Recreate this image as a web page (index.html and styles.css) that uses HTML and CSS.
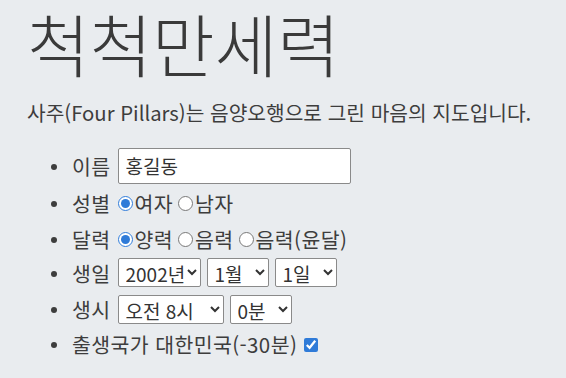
FILE: index.html
```html
<!DOCTYPE html>
<html lang="ko">
<head>
<meta charset="utf-8">
<title>척척만세력</title>
<link rel="stylesheet" href="styles.css">
</head>
<body>
<main class="page">
  <h1 class="title">척척만세력</h1>
  <p class="lead">사주(Four Pillars)는 음양오행으로 그린 마음의 지도입니다.</p>
  <ul class="form-list">
    <li class="row row-1"><span class="label">이름</span><input class="name-input" type="text" value="홍길동"></li>
    <li class="row row-2"><span class="label">성별</span><input class="radio" type="radio" name="sex" checked><span class="opt">여자</span><input class="radio" type="radio" name="sex"><span class="opt">남자</span></li>
    <li class="row row-3"><span class="label">달력</span><input class="radio" type="radio" name="cal" checked><span class="opt">양력</span><input class="radio" type="radio" name="cal"><span class="opt">음력</span><input class="radio" type="radio" name="cal"><span class="opt">음력(윤달)</span></li>
    <li class="row row-4"><span class="label">생일</span>
      <select class="sel sel-year"><option>2002년</option></select>
      <select class="sel sel-month"><option>1월</option></select>
      <select class="sel sel-day"><option>1일</option></select>
    </li>
    <li class="row row-5"><span class="label">생시</span>
      <select class="sel sel-hour"><option>오전 8시</option></select>
      <select class="sel sel-min"><option>0분</option></select>
    </li>
    <li class="row row-6"><span class="label">출생국가 대한민국(-30분)</span><input class="check" type="checkbox" checked></li>
  </ul>
</main>
</body>
</html>
```

FILE: styles.css
```css
html, body {
  margin: 0;
  padding: 0;
  background: #e9ecef;
}
body {
  font-family: "Noto Sans CJK KR", "Noto Sans", sans-serif;
  color: #3d3d3d;
}
.page {
  padding: 0 0 0 27px;
}
.title {
  margin: 0;
  font-size: 68px;
  font-weight: 300;
  line-height: 86px;
  color: #3a3a3a;
}
.lead {
  margin: 0;
  font-size: 20.3px;
  line-height: 26px;
  padding-top: 13px;
}
.form-list {
  margin: 0;
  padding: 22px 0 0 24px;
  list-style: none;
}
.row {
  display: flex;
  align-items: center;
  font-size: 20.5px;
  letter-spacing: 0.4px;
  line-height: 26px;
}
.row::before {
  content: "";
  flex: none;
  width: 6px;
  height: 6px;
  border-radius: 50%;
  background: #3d3d3d;
  margin-right: 15px;
  margin-top: 2px;
}
.row-1 { height: 37px; }
.row-2 { height: 38px; }
.row-3 { height: 33px; }
.row-4 { height: 35px; }
.row-5 { height: 38px; }
.row-6 { height: 32px; }
.label {
  margin-right: 7px;
}
.name-input {
  box-sizing: border-box;
  width: 233px;
  height: 36px;
  font: inherit;
  font-size: 19px;
  letter-spacing: 0;
  padding: 0 7px;
  border: 1px solid #8a8a8a;
  border-radius: 2px;
  background: #fff;
  color: #333;
}
.radio {
  flex: none;
  width: 15px;
  height: 15px;
  margin: 1px 2px 0 0;
  accent-color: #2f7bd8;
}
.opt + .radio {
  margin-left: 5px;
}
.check {
  flex: none;
  width: 14px;
  height: 14px;
  margin: 1px 0 0 0;
  accent-color: #2f7bd8;
}
.sel {
  box-sizing: border-box;
  height: 29px;
  font: inherit;
  font-size: 19px;
  letter-spacing: 0;
  border: 1px solid #8a8a8a;
  border-radius: 2px;
  background: #fff;
  color: #333;
  margin-right: 6px;
  padding: 0 0 0 3px;
}
.sel-year { width: 83px; }
.sel-month { width: 62px; }
.sel-day { width: 62px; }
.sel-hour { width: 106px; }
.sel-min { width: 62px; }
```
